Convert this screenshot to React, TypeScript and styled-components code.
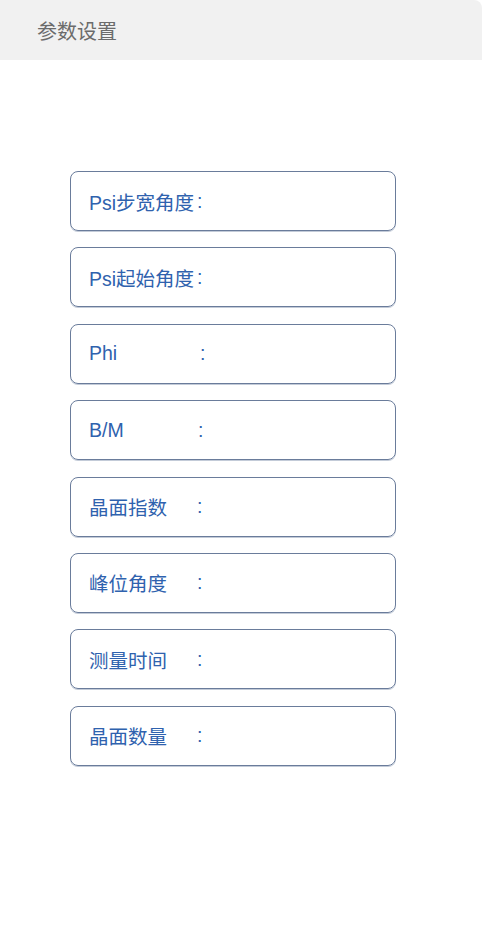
import React from "react";
import styled, { createGlobalStyle } from "styled-components";

const Global = createGlobalStyle`
  html, body { margin: 0; padding: 0; background: #ffffff; }
  body { font-family: "Liberation Sans", "Noto Sans CJK SC", sans-serif; }
  * { box-sizing: border-box; }
`;

const Page = styled.div`
  width: 482px;
  min-height: 951px;
  background: #ffffff;
`;

const Header = styled.header`
  height: 60px;
  background: #f1f1f1;
  border-top-right-radius: 8px;
  display: flex;
  align-items: center;
  padding-left: 37px;
  color: #6b6b6b;
  font-size: 20px;
`;

const List = styled.div`
  display: flex;
  flex-direction: column;
  gap: 16.4px;
  padding: 111px 0 0 70px;
`;

const Field = styled.div`
  width: 326px;
  height: 60px;
  border: 1px solid #6a7c9b;
  border-radius: 8px;
  box-shadow: 0 1px 0 #c3cbd8;
  display: flex;
  align-items: center;
  padding-left: 18px;
  color: #2f62ae;
  font-size: 19.5px;
`;

const Label = styled.span<{ $w: number }>`
  display: inline-block;
  min-width: ${(p) => p.$w}px;
  white-space: pre;
`;

const Colon = styled.span`
  margin-left: 3px;
  font-family: "Liberation Sans", sans-serif;
`;

const rows: { label: string; w: number }[] = [
  { label: "Psi步宽角度", w: 0 },
  { label: "Psi起始角度", w: 0 },
  { label: "Phi", w: 108 },
  { label: "B/M", w: 106 },
  { label: "晶面指数", w: 105 },
  { label: "峰位角度", w: 105 },
  { label: "测量时间", w: 105 },
  { label: "晶面数量", w: 105 },
];

export default function App() {
  return (
    <Page>
      <Global />
      <Header>参数设置</Header>
      <List>
        {rows.map((r) => (
          <Field key={r.label}>
            <Label $w={r.w}>{r.label}</Label>
            <Colon>:</Colon>
          </Field>
        ))}
      </List>
    </Page>
  );
}
